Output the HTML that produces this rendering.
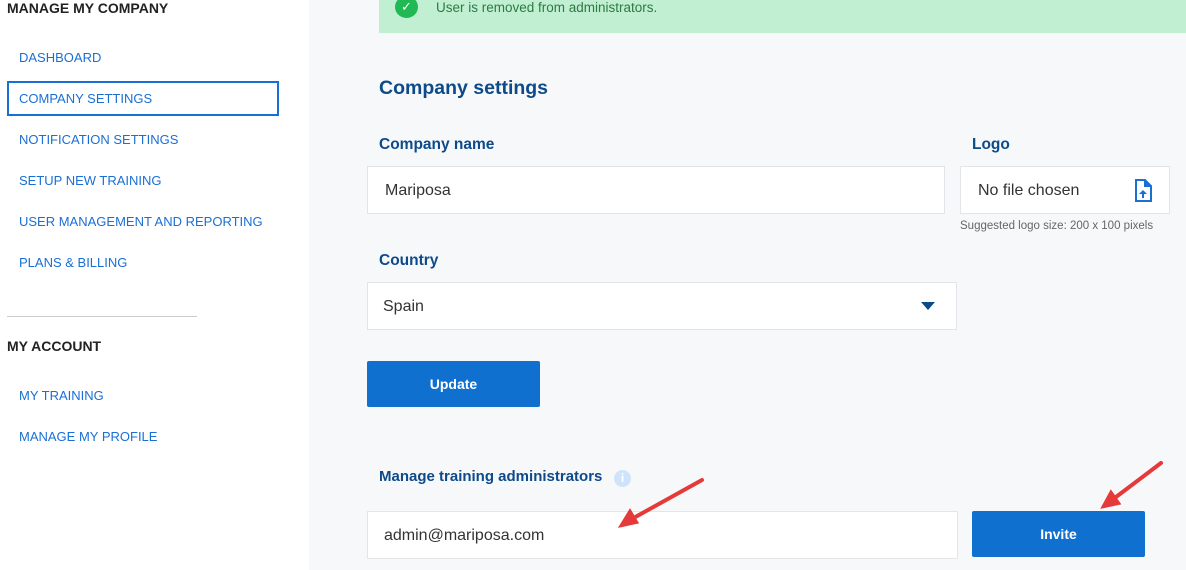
<!DOCTYPE html>
<html><head><style>
body{margin:0;width:1186px;height:570px;overflow:hidden;background:#f7f8fa;font-family:"Liberation Sans",sans-serif;position:relative}
.side{position:absolute;left:0;top:0;width:309px;height:570px;background:#fff}
.a{position:absolute;font-size:13px;color:#1a6fd4;left:19px}
.h{position:absolute;left:7px;font-weight:bold;font-size:14px;color:#222}
.lbl{position:absolute;font-weight:bold;color:#0d4a8a;font-size:15.5px}
.inp{position:absolute;background:#fff;border:1px solid #e3e5e8;box-sizing:border-box;font-size:16px;color:#333;display:flex;align-items:center;padding-top:2px}
.btn{position:absolute;background:#1070d0;color:#fff;font-weight:bold;font-size:14px;border-radius:2px;display:flex;align-items:center;justify-content:center}
</style></head><body>
<div class="side">
<div class="h" style="top:0">MANAGE MY COMPANY</div>
<div class="a" style="top:50px">DASHBOARD</div>
<div style="position:absolute;left:7px;top:81px;width:272px;height:35px;border:2px solid #1a6fd4;box-sizing:border-box"></div>
<div class="a" style="top:91px">COMPANY SETTINGS</div>
<div class="a" style="top:132px">NOTIFICATION SETTINGS</div>
<div class="a" style="top:173px">SETUP NEW TRAINING</div>
<div class="a" style="top:214px">USER MANAGEMENT AND REPORTING</div>
<div class="a" style="top:255px">PLANS &amp; BILLING</div>
<div style="position:absolute;left:7px;top:316px;width:190px;height:1px;background:#ccc"></div>
<div class="h" style="top:338px">MY ACCOUNT</div>
<div class="a" style="top:388px">MY TRAINING</div>
<div class="a" style="top:429px">MANAGE MY PROFILE</div>
</div>
<div style="position:absolute;left:379px;top:0;width:807px;height:33px;background:#c0efd2"></div>
<div style="position:absolute;left:395px;top:-4px;width:23px;height:22px;border-radius:50%;background:#20b954;color:#fff;font-size:13px;text-align:center;line-height:22px">✓</div>
<div style="position:absolute;left:436px;top:0;font-size:13.5px;color:#2d7a45">User is removed from administrators.</div>
<div class="lbl" style="left:379px;top:77px;font-size:19.5px">Company settings</div>
<div class="lbl" style="left:379px;top:136px">Company name</div>
<div class="inp" style="left:367px;top:166px;width:578px;height:48px;padding-left:17px">Mariposa</div>
<div class="lbl" style="left:972px;top:136px">Logo</div>
<div class="inp" style="left:960px;top:166px;width:210px;height:48px;padding-left:17px">No file chosen</div>
<svg style="position:absolute;left:1134px;top:179px" width="18" height="24" viewBox="0 0 18 24"><path d="M2 1h9l6 6v15H2z" fill="none" stroke="#1a6fd4" stroke-width="2"/><path d="M10 1v7h7" fill="#1a6fd4"/><path d="M9 11l-4 4h3v4h2v-4h3z" fill="#1a6fd4"/></svg>
<div style="position:absolute;left:960px;top:220px;font-size:11.5px;color:#666">Suggested logo size: 200 x 100 pixels</div>
<div class="lbl" style="left:379px;top:252px">Country</div>
<div class="inp" style="left:367px;top:282px;width:590px;height:48px;padding-left:15px">Spain</div>
<div style="position:absolute;left:921px;top:302px;border-left:7px solid transparent;border-right:7px solid transparent;border-top:8px solid #0d4a8a"></div>
<div class="btn" style="left:367px;top:361px;width:173px;height:46px">Update</div>
<div class="lbl" style="left:379px;top:468px;font-size:15px">Manage training administrators</div>
<div style="position:absolute;left:614px;top:470px;width:17px;height:17px;border-radius:50%;background:#cfe4fa;color:#fff;font-size:12px;text-align:center;line-height:17px;font-weight:bold">i</div>
<div class="inp" style="left:367px;top:511px;width:591px;height:48px;padding-left:16px">admin@mariposa.com</div>
<div class="btn" style="left:972px;top:511px;width:173px;height:46px">Invite</div>
<svg style="position:absolute;left:0;top:0" width="1186" height="570"><g stroke="#e53a3a" stroke-width="4" fill="#e53a3a" stroke-linecap="round"><line x1="702" y1="480" x2="630" y2="520"/><path d="M622 525l14-3-6-10z"/><line x1="1161" y1="463" x2="1112" y2="500"/><path d="M1104 506l14-3-7-10z"/></g></svg>
</body></html>
